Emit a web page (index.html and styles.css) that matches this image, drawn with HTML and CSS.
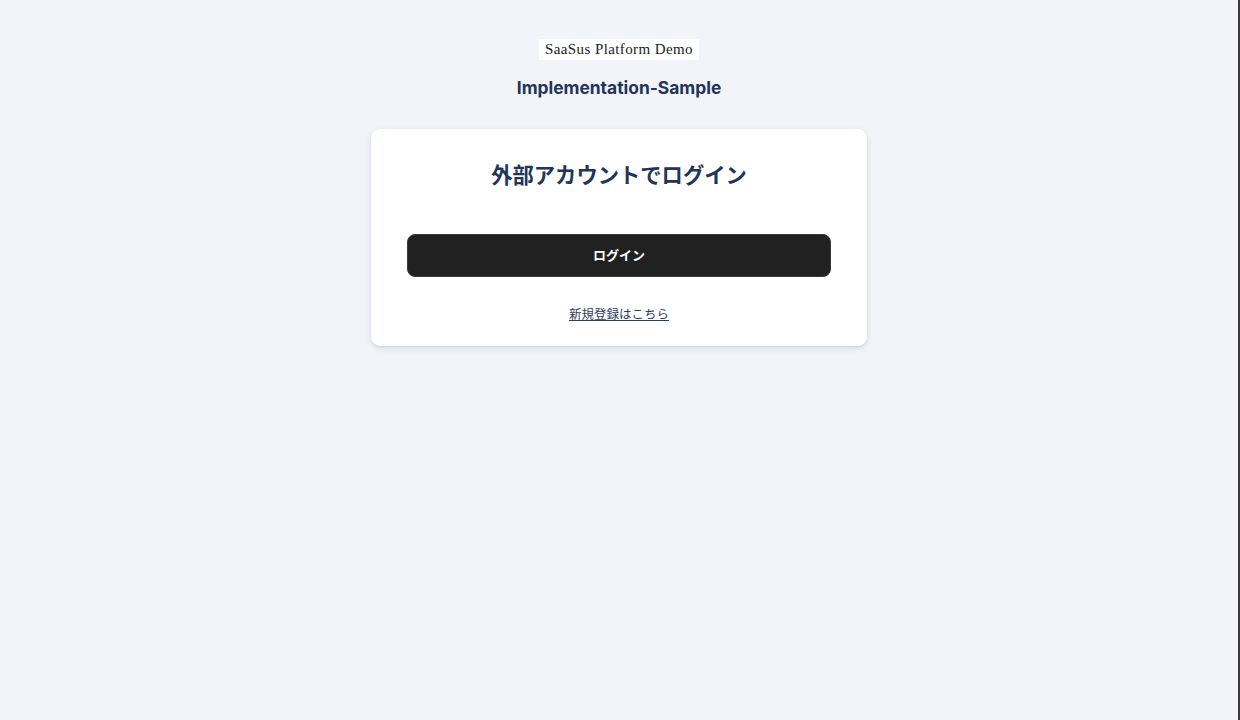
FILE: index.html
```html
<!DOCTYPE html>
<html lang="ja">
<head>
<meta charset="utf-8">
<title>Login</title>
<link rel="stylesheet" href="styles.css">
</head>
<body>
<div class="page">
  <header class="brand">
    <div class="demo">SaaSus Platform Demo</div>
    <h2 class="app">Implementation-Sample</h2>
  </header>
  <main class="card">
    <h1 class="title">外部アカウントでログイン</h1>
    <button class="btn" type="button">ログイン</button>
    <a class="signup" href="#">新規登録はこちら</a>
  </main>
</div>
</body>
</html>
```

FILE: styles.css
```css
html, body {
  margin: 0;
  padding: 0;
  height: 100%;
}
body {
  background: #f2f4f9;
  font-family: Inter, "Noto Sans CJK JP", sans-serif;
}
.page {
  box-sizing: border-box;
  min-height: 100%;
  border-right: 2px solid #3a3a3a;
  display: flex;
  flex-direction: column;
  align-items: center;
  padding-top: 39px;
}
.brand {
  display: flex;
  flex-direction: column;
  align-items: center;
}
.demo {
  background: #ffffff;
  font-family: "Liberation Serif", "DejaVu Serif", serif;
  font-size: 15px;
  letter-spacing: 0.4px;
  line-height: 21px;
  color: #222;
  padding: 0 6px;
}
.app {
  margin: 17px 0 0;
  font-size: 17.4px;
  line-height: 22px;
  font-weight: 700;
  color: #22345a;
}
.card {
  margin-top: 30px;
  width: 496px;
  box-sizing: border-box;
  background: #fff;
  border-radius: 9px;
  box-shadow: 0 2px 6px rgba(40, 50, 90, 0.12), 0 1px 2px rgba(40, 50, 90, 0.08);
  padding: 30px 36px 22px;
  display: flex;
  flex-direction: column;
  align-items: center;
}
.title {
  margin: 0;
  font-size: 21.3px;
  line-height: 30px;
  font-weight: 700;
  color: #22345a;
  font-family: "Noto Sans CJK JP", sans-serif;
}
.btn {
  margin-top: 45px;
  width: 100%;
  height: 43px;
  padding: 0 0 3px;
  border: 1px solid #3a3a3a;
  border-radius: 8px;
  background: #212121;
  color: #fff;
  font-family: "Noto Sans CJK JP", sans-serif;
  font-size: 13px;
  font-weight: 700;
  cursor: pointer;
}
.signup {
  margin-top: 27px;
  font-family: "Noto Sans CJK JP", sans-serif;
  font-size: 12.5px;
  line-height: 20px;
  color: #2f3c5e;
  text-decoration: underline;
}
```
